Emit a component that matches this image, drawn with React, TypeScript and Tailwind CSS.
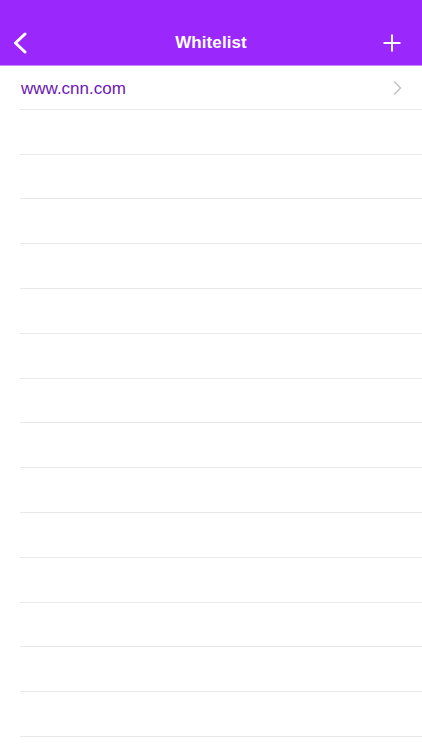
export default function App() {
  const rows = ["www.cnn.com", ...Array(15).fill("")];
  return (
    <div className="w-[422px] h-[750px] overflow-hidden bg-white font-['Liberation_Sans',Arial,sans-serif]">
      <div className="bg-[#9a28fc] h-[66px] pt-[20px] flex items-center justify-between border-b border-[#c58cf9]">
        <button className="w-[44px] h-[45px] flex items-center justify-start pl-[12px]">
          <svg width="16" height="22" viewBox="0 0 16 22" fill="none">
            <path d="M13 2L3.5 11L13 20" stroke="white" strokeWidth="3" strokeLinecap="round" strokeLinejoin="round" />
          </svg>
        </button>
        <h1 className="text-white text-[17px] font-bold tracking-[0.1px]">Whitelist</h1>
        <button className="w-[44px] h-[45px] flex items-center justify-end pr-[21px]">
          <svg width="18" height="18" viewBox="0 0 18 18" fill="none">
            <path d="M9 0.5V17.5M0.5 9H17.5" stroke="white" strokeWidth="2" />
          </svg>
        </button>
      </div>
      <ul className="-mt-px">
        {rows.map((r, i) => (
          <li key={i} className="pl-[20px]">
            <div className="h-[44.8px] border-b border-[#e8e8e8] flex items-center justify-between pr-[20px]">
              <span className="text-[17px] pl-px pt-[3px] text-[#6b17b8]">{r}</span>
              {r && (
                <svg width="9" height="14" viewBox="0 0 9 14" fill="none" className="mt-[2px]">
                  <path d="M1.5 1L7.5 7L1.5 13" stroke="#c4c4c9" strokeWidth="1.6" strokeLinecap="round" strokeLinejoin="round" />
                </svg>
              )}
            </div>
          </li>
        ))}
      </ul>
    </div>
  );
}
